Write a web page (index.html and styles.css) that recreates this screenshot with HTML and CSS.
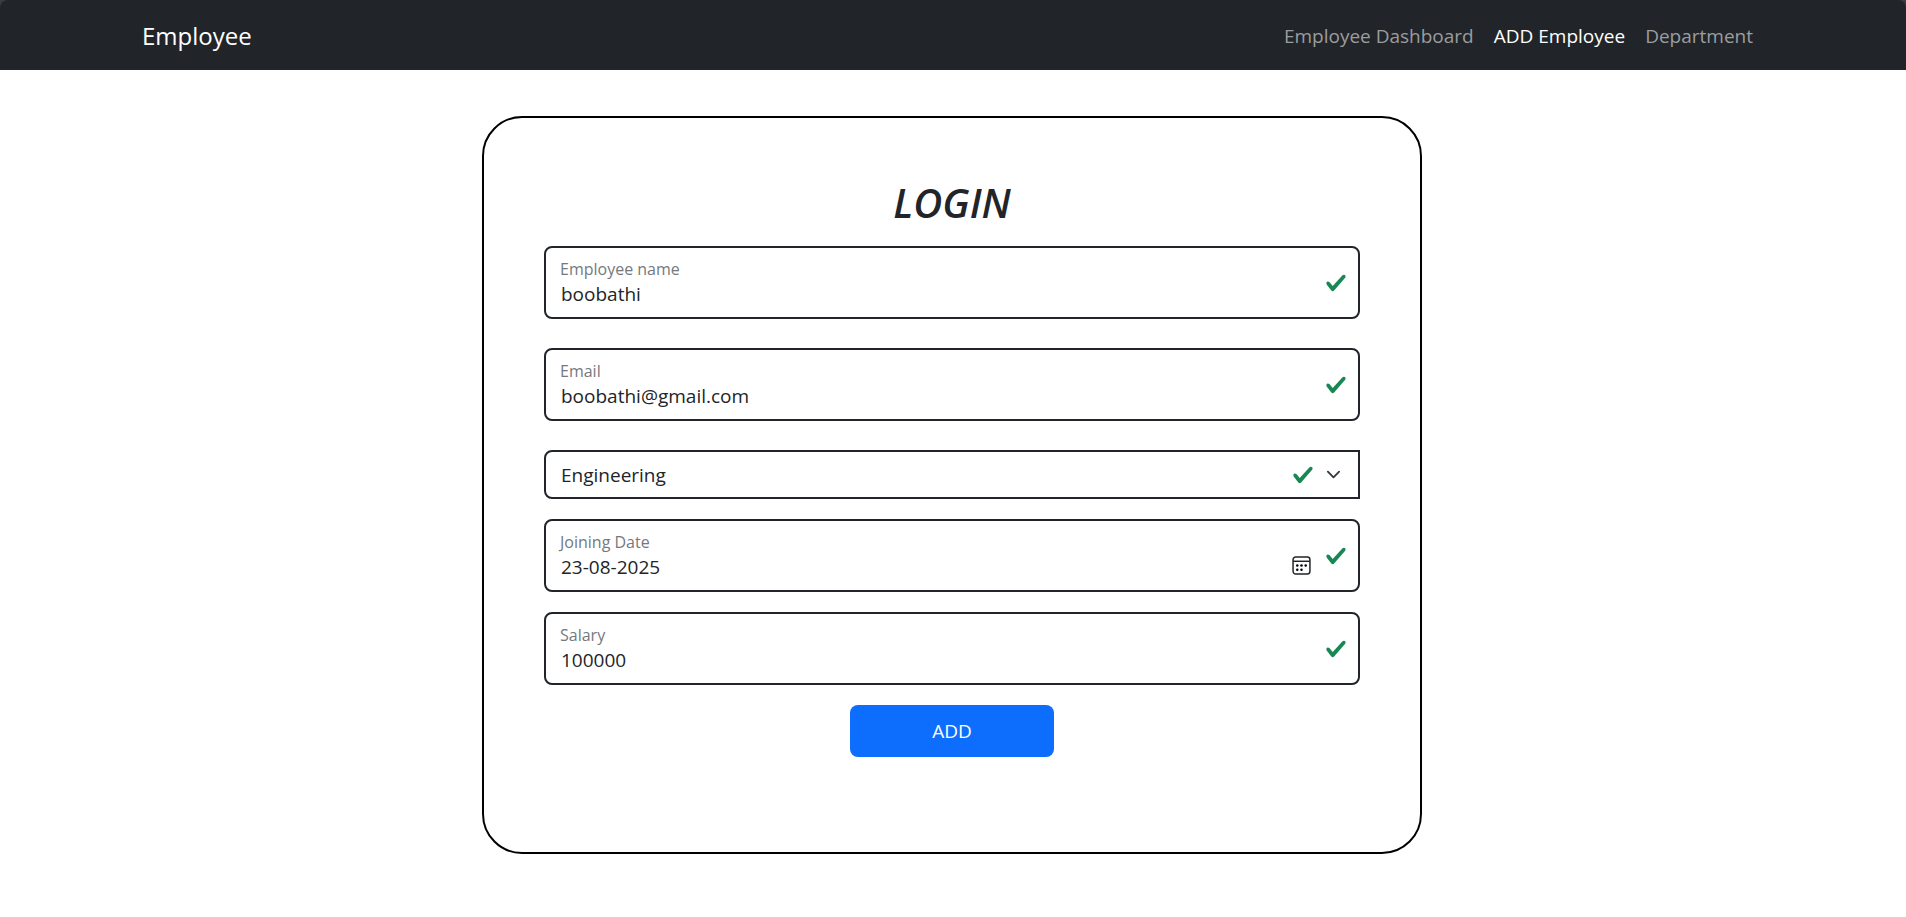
FILE: index.html
```html
<!DOCTYPE html>
<html lang="en">
<head>
<meta charset="utf-8">
<title>Employee</title>
<meta name="viewport" content="width=device-width, initial-scale=1">
<link rel="stylesheet" href="styles.css">
</head>
<body>
<svg class="sprite" aria-hidden="true">
  <symbol id="check" viewBox="0 0 8 8"><path fill="#198754" d="M2.3 6.73.6 4.53c-.4-1.04.46-1.4 1.1-.8l1.1 1.4 3.4-3.8c.6-.63 1.6-.27 1.2.7l-4 4.6c-.43.5-.8.4-1.1.1z"/></symbol>
</svg>
<header class="topbar">
  <nav class="navbar">
    <div class="container">
      <a class="brand" href="#">Employee</a>
      <ul class="nav">
        <li><a href="#">Employee Dashboard</a></li>
        <li><a class="active" href="#">ADD Employee</a></li>
        <li><a href="#">Department</a></li>
      </ul>
    </div>
  </nav>
</header>
<main>
  <form class="card">
    <h1>LOGIN</h1>
    <div class="field roomy">
      <label for="name">Employee name</label>
      <input id="name" type="text" value="boobathi">
      <svg class="valid"><use href="#check"/></svg>
    </div>
    <div class="field roomy">
      <label for="email">Email</label>
      <input id="email" type="email" value="boobathi@gmail.com">
      <svg class="valid"><use href="#check"/></svg>
    </div>
    <div class="field">
      <select id="department" aria-label="Department">
        <option selected>Engineering</option>
      </select>
      <svg class="valid beside"><use href="#check"/></svg>
      <svg class="chevron" viewBox="0 0 16 16"><path fill="none" stroke="#343a40" stroke-linecap="round" stroke-linejoin="round" stroke-width="2" d="m2 5 6 6 6-6"/></svg>
    </div>
    <div class="field">
      <label for="date">Joining Date</label>
      <input id="date" type="text" value="23-08-2025">
      <button class="calendar" type="button" aria-label="Choose date">
        <svg viewBox="0 0 18 18"><rect x="1" y="1" width="16" height="16" rx="2.5" fill="none" stroke="#212529" stroke-width="1.4"/><path d="M1 5h16" stroke="#212529" stroke-width="1.4"/><g fill="#000"><circle cx="5" cy="9" r="1.2"/><circle cx="9" cy="9" r="1.2"/><circle cx="13" cy="9" r="1.2"/><circle cx="5" cy="13" r="1.2"/><circle cx="9" cy="13" r="1.2"/></g></svg>
      </button>
      <svg class="valid"><use href="#check"/></svg>
    </div>
    <div class="field">
      <label for="salary">Salary</label>
      <input id="salary" type="text" inputmode="numeric" value="100000">
      <svg class="valid"><use href="#check"/></svg>
    </div>
    <button class="submit" type="submit">ADD</button>
  </form>
</main>
</body>
</html>
```
FILE: styles.css
```css
* {
  box-sizing: border-box;
}

body {
  margin: 0;
  background: #fff;
  color: #212529;
  font: 19px/30px "Open Sans", "Noto Sans", sans-serif;
}

.sprite {
  position: absolute;
  width: 0;
  height: 0;
}

.topbar {
  background: #3c3c3c;
}

.navbar {
  padding: 11px 0 9px;
  background: #212529;
  border-radius: 8px 8px 0 0;
}

.container {
  display: flex;
  align-items: center;
  justify-content: space-between;
  max-width: 1652px;
  min-height: 50px;
  margin: 0 auto;
  padding: 0 15px;
}

.brand {
  color: #fff;
  font-size: 24px;
  text-decoration: none;
}

.nav {
  display: flex;
  gap: 20px;
  margin: 0;
  padding: 0 11px;
  list-style: none;
}

.nav a {
  color: #9b9d9f;
  text-decoration: none;
}

.nav .active {
  color: #fff;
}

main {
  padding: 46px 16px 46px 14px;
}

.card {
  max-width: 940px;
  margin: 0 auto;
  padding: 60px 60px 95px;
  border: 2px solid #000;
  border-radius: 40px;
}

h1 {
  margin: 0 0 18px;
  font-size: 40px;
  font-style: italic;
  font-weight: 600;
  line-height: 50px;
  text-align: center;
}

.field {
  position: relative;
  margin-bottom: 20px;
}

.roomy {
  margin-bottom: 29px;
}

.field label {
  position: absolute;
  top: 11px;
  left: 16px;
  color: #75797d;
  font-size: 16px;
  line-height: 24px;
}

.field input,
.field select {
  display: block;
  width: 100%;
  border: 2px solid #212529;
  border-radius: 8px;
  background: #fff;
  color: #212529;
  font: inherit;
}

.field input {
  height: 73px;
  padding: 31px 60px 8px 15px;
}

.field select {
  height: 49px;
  padding: 0 90px 0 15px;
  border-radius: 8px 0 0 8px;
  appearance: none;
}

.valid {
  position: absolute;
  top: calc(50% - 11px);
  right: 13px;
  width: 22px;
  height: 22px;
}

.beside {
  right: 46px;
}

.chevron {
  position: absolute;
  top: calc(50% - 8px);
  right: 19px;
  width: 15px;
  height: 15px;
}

.calendar {
  position: absolute;
  top: 37px;
  right: 49px;
  width: 19px;
  height: 19px;
  padding: 0;
  border: 0;
  background: none;
}

.calendar svg {
  display: block;
  width: 100%;
}

.submit {
  display: block;
  width: 25%;
  height: 52px;
  margin: 0 auto;
  border: 0;
  border-radius: 8px;
  background: #0d6efd;
  color: #fff;
  font: inherit;
}
```
